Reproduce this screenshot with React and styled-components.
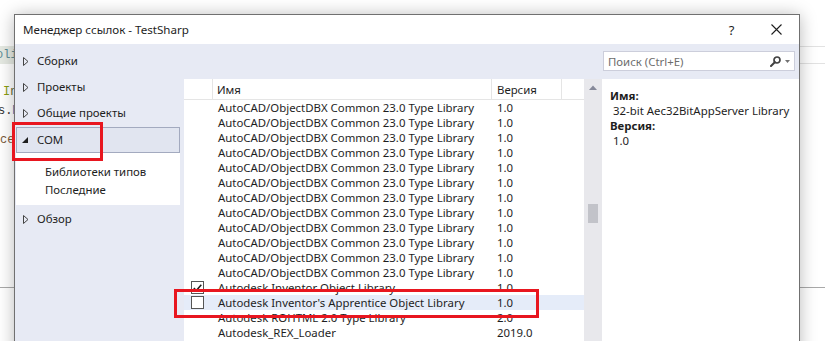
import React from "react";
import styled, { createGlobalStyle } from "styled-components";

const Global = createGlobalStyle`
  html, body { margin: 0; padding: 0; background: #ffffff; }
  body { width: 825px; height: 341px; overflow: hidden; }
  #root { width: 825px; height: 341px; }
`;

const Page = styled.div`
  position: relative;
  width: 825px;
  height: 341px;
  overflow: hidden;
  background: #ffffff;
  font-family: "Noto Sans", sans-serif;
`;

/* ---------- background code editor ---------- */
const Editor = styled.div`
  display: flex;
  flex-direction: column;
  width: 100%;
  height: 100%;
  font-family: "Liberation Mono", monospace;
  font-size: 12px;
`;

const Band = styled.div`
  margin-top: 46px;
  height: 16px;
  border-top: 1px solid #e2e2e2;
  border-bottom: 1px solid #e2e2e2;
  display: flex;
  align-items: center;
`;

const HighlightChunk = styled.span`
  display: inline-flex;
  align-items: center;
  height: 18px;
  width: 20px;
  margin-left: -5px;
  padding-left: 1px;
  background: #e5e9e2;
  color: #5f8e98;
  line-height: 16px;
`;

const CodeLine = styled.div`
  height: 16px;
  line-height: 16px;
  margin-top: ${(p) => p.$gap}px;
  margin-left: ${(p) => p.$indent}px;
  white-space: pre;
`;

const Tok = styled.span`
  color: ${(p) => p.$c};
`;

const Rule = styled.div`
  margin-top: ${(p) => p.$gap}px;
  height: 1px;
  background: #a9a9a9;
`;

/* ---------- dialog ---------- */
const Dialog = styled.div`
  position: absolute;
  left: 14px;
  top: 14px;
  width: 786px;
  height: 345px;
  box-sizing: border-box;
  border: 1px solid #707070;
  background: #ffffff;
  box-shadow: 0 1px 16px rgba(0, 0, 0, 0.28);
  display: flex;
  flex-direction: column;
  color: #1e1e1e;
  font-size: 11.4px;
`;

const TitleBar = styled.div`
  height: 29px;
  flex: none;
  display: flex;
  align-items: center;
  background: #ffffff;
`;

const Title = styled.div`
  flex: 1;
  padding-left: 8px;
  font-size: 11.6px;
  color: #1e1e1e;
`;

const TitleButton = styled.div`
  width: 45px;
  height: 29px;
  display: flex;
  align-items: center;
  justify-content: center;
  font-size: 13px;
  color: #1e1e1e;
`;

const Body = styled.div`
  flex: 1;
  min-height: 0;
  background: #e7eaf4;
  display: grid;
  grid-template-columns: 164px 1fr;
  column-gap: 4px;
  padding-left: 1px;
`;

const Nav = styled.div`
  display: flex;
  flex-direction: column;
  padding-top: 4px;
`;

const NavItem = styled.div`
  height: ${(p) => (p.$selected ? 24 : 26)}px;
  display: flex;
  align-items: center;
  gap: ${(p) => (p.$selected ? 9 : 8)}px;
  padding-left: ${(p) => (p.$selected ? 5 : 7)}px;
  margin-top: ${(p) => p.$gap || 0}px;
  border: ${(p) => (p.$selected ? "1px solid #a3aabf" : "none")};
  background: ${(p) => (p.$selected ? "#e1e5f0" : "transparent")};
  line-height: 16px;
`;

const SubList = styled.div`
  background: #ffffff;
  padding: 10px 0 6px 29px;
  display: flex;
  flex-direction: column;
`;

const SubItem = styled.div`
  height: 18px;
  line-height: 18px;
`;

const Main = styled.div`
  display: flex;
  flex-direction: column;
  min-width: 0;
`;

const SearchRow = styled.div`
  display: flex;
  justify-content: flex-end;
  padding: 7px 4px 8px 0;
`;

const SearchBox = styled.div`
  width: 192px;
  height: 20px;
  box-sizing: border-box;
  border: 1px solid #cccedb;
  background: #ffffff;
  display: flex;
  align-items: center;
  padding: 0 4px 0 4px;
  gap: 4px;
`;

const Placeholder = styled.span`
  flex: 1;
  color: #6d6d6d;
`;

const Content = styled.div`
  flex: 1;
  min-height: 0;
  display: flex;
`;

const List = styled.div`
  width: 400px;
  flex: none;
  background: #ffffff;
  display: flex;
  flex-direction: column;
  overflow: hidden;
`;

const Cols = "29px 279px 70px 1fr";

const Header = styled.div`
  display: grid;
  grid-template-columns: ${Cols};
  height: 20px;
  flex: none;
  border-bottom: 1px solid #e5e5e5;
`;

const HeadCell = styled.div`
  display: flex;
  align-items: center;
  padding-left: ${(p) => p.$pad || 0}px;
  border-right: ${(p) => (p.$sep ? "1px solid #e5e5e5" : "none")};
`;

const Row = styled.div`
  display: grid;
  grid-template-columns: ${Cols};
  height: 15px;
  flex: none;
  align-items: center;
  background: ${(p) => (p.$hover ? "#e5ecf9" : "transparent")};
  line-height: 15px;
  white-space: nowrap;
`;

const CheckCell = styled.div`
  display: flex;
  align-items: center;
  padding-left: 7px;
`;

const Check = styled.div`
  width: 13px;
  height: 13px;
  box-sizing: border-box;
  border: 1px solid #555555;
  background: #ffffff;
  display: flex;
  align-items: center;
  justify-content: center;
`;

const TextCell = styled.div`
  padding-left: 5px;
  overflow: hidden;
`;

const ScrollTrack = styled.div`
  width: 18px;
  flex: none;
  background: #e8e8ec;
  display: flex;
  flex-direction: column;
  align-items: center;
`;

const ScrollArrow = styled.div`
  height: 17px;
  display: flex;
  align-items: center;
  justify-content: center;
`;

const Thumb = styled.div`
  margin-top: 108px;
  width: 10px;
  height: 19px;
  background: #c2c3c9;
`;

const Details = styled.div`
  flex: 1;
  background: #ffffff;
  padding: 9px 8px;
  display: flex;
  flex-direction: column;
`;

const DetailLabel = styled.div`
  font-weight: 700;
  line-height: 15px;
`;

const DetailValue = styled.div`
  line-height: 15px;
  padding-left: 3px;
`;

/* annotation boxes drawn on top of the screenshot */
const Marker = styled.div`
  position: absolute;
  left: ${(p) => p.$x}px;
  top: ${(p) => p.$y}px;
  width: ${(p) => p.$w}px;
  height: ${(p) => p.$h}px;
  box-sizing: border-box;
  border: 3px solid #e8161f;
  pointer-events: none;
`;

const Collapsed = () => (
  <svg width="6" height="9" viewBox="0 0 6 9">
    <polygon points="0.5,0.5 5,4.5 0.5,8.5" fill="none" stroke="#444" strokeWidth="1" />
  </svg>
);

const Expanded = () => (
  <svg width="6" height="6" viewBox="0 0 6 6">
    <polygon points="6,0 6,6 0,6" fill="#1e1e1e" />
  </svg>
);

const rows = [
  ...Array.from({ length: 12 }, () => ({ name: "AutoCAD/ObjectDBX Common 23.0 Type Library", ver: "1.0" })),
  { name: "Autodesk Inventor Object Library", ver: "1.0", checked: true },
  { name: "Autodesk Inventor's Apprentice Object Library", ver: "1.0", hover: true },
  { name: "Autodesk ROHTML 2.0 Type Library", ver: "2.0" },
  { name: "Autodesk_REX_Loader", ver: "2019.0" },
  { name: "Autodesk.Revit.DB", ver: "1.0" },
];

export default function App() {
  return (
    <Page>
      <Global />
      <Editor>
        <Band>
          <HighlightChunk>oli</HighlightChunk>
        </Band>
        <CodeLine $gap={20} $indent={3}>
          <Tok $c="#8a9d10">I</Tok>
          <Tok $c="#5a6630">n</Tok>
        </CodeLine>
        <CodeLine $gap={3} $indent={-2}>
          <Tok $c="#333333">s.</Tok>
          <Tok $c="#2f6aa8">M</Tok>
        </CodeLine>
        <CodeLine $gap={13} $indent={0}>
          <Tok $c="#7b5a3a">ce</Tok>
        </CodeLine>
        <Rule $gap={139} />
      </Editor>

      <Dialog>
        <TitleBar>
          <Title>Менеджер ссылок - TestSharp</Title>
          <TitleButton>?</TitleButton>
          <TitleButton>
            <svg width="11" height="11" viewBox="0 0 11 11">
              <path d="M0.5 0.5 L10.5 10.5 M10.5 0.5 L0.5 10.5" stroke="#1e1e1e" strokeWidth="1.1" />
            </svg>
          </TitleButton>
        </TitleBar>
        <Body>
          <Nav>
            <NavItem>
              <Collapsed />
              <span>Сборки</span>
            </NavItem>
            <NavItem>
              <Collapsed />
              <span>Проекты</span>
            </NavItem>
            <NavItem>
              <Collapsed />
              <span>Общие проекты</span>
            </NavItem>
            <NavItem $selected $gap={1}>
              <Expanded />
              <span>COM</span>
            </NavItem>
            <SubList>
              <SubItem>Библиотеки типов</SubItem>
              <SubItem>Последние</SubItem>
            </SubList>
            <NavItem $gap={1}>
              <Collapsed />
              <span>Обзор</span>
            </NavItem>
          </Nav>
          <Main>
            <SearchRow>
              <SearchBox>
                <Placeholder>Поиск (Ctrl+E)</Placeholder>
                <svg width="11" height="11" viewBox="0 0 11 11">
                  <circle cx="7" cy="4" r="3" fill="none" stroke="#424242" strokeWidth="1.7" />
                  <path d="M4.8 6.2 L1 10" stroke="#424242" strokeWidth="2" strokeLinecap="round" />
                </svg>
                <svg width="5" height="3" viewBox="0 0 5 3">
                  <polygon points="0,0 5,0 2.5,3" fill="#717171" />
                </svg>
              </SearchBox>
            </SearchRow>
            <Content>
              <List>
                <Header>
                  <HeadCell $sep />
                  <HeadCell $sep $pad={4}>Имя</HeadCell>
                  <HeadCell $sep $pad={5}>Версия</HeadCell>
                  <HeadCell />
                </Header>
                {rows.map((r, i) => (
                  <Row key={i} $hover={r.hover}>
                    <CheckCell>
                      {(r.checked || r.hover) && (
                        <Check>
                          {r.checked && (
                            <svg width="9" height="8" viewBox="0 0 9 8">
                              <path d="M0.8 4 L3.3 6.6 L8.3 0.8" fill="none" stroke="#1e1e1e" strokeWidth="1.5" />
                            </svg>
                          )}
                        </Check>
                      )}
                    </CheckCell>
                    <TextCell>{r.name}</TextCell>
                    <TextCell>{r.ver}</TextCell>
                    <div />
                  </Row>
                ))}
              </List>
              <ScrollTrack>
                <ScrollArrow>
                  <svg width="8" height="5" viewBox="0 0 8 5">
                    <polygon points="0,5 4,0.5 8,5" fill="#868999" />
                  </svg>
                </ScrollArrow>
                <Thumb />
              </ScrollTrack>
              <Details>
                <DetailLabel>Имя:</DetailLabel>
                <DetailValue>32-bit Aec32BitAppServer Library</DetailValue>
                <DetailLabel>Версия:</DetailLabel>
                <DetailValue>1.0</DetailValue>
              </Details>
            </Content>
          </Main>
        </Body>
      </Dialog>

      <Marker $x={12} $y={122} $w={91} $h={39} />
      <Marker $x={174} $y={289} $w={365} $h={29} />
    </Page>
  );
}
